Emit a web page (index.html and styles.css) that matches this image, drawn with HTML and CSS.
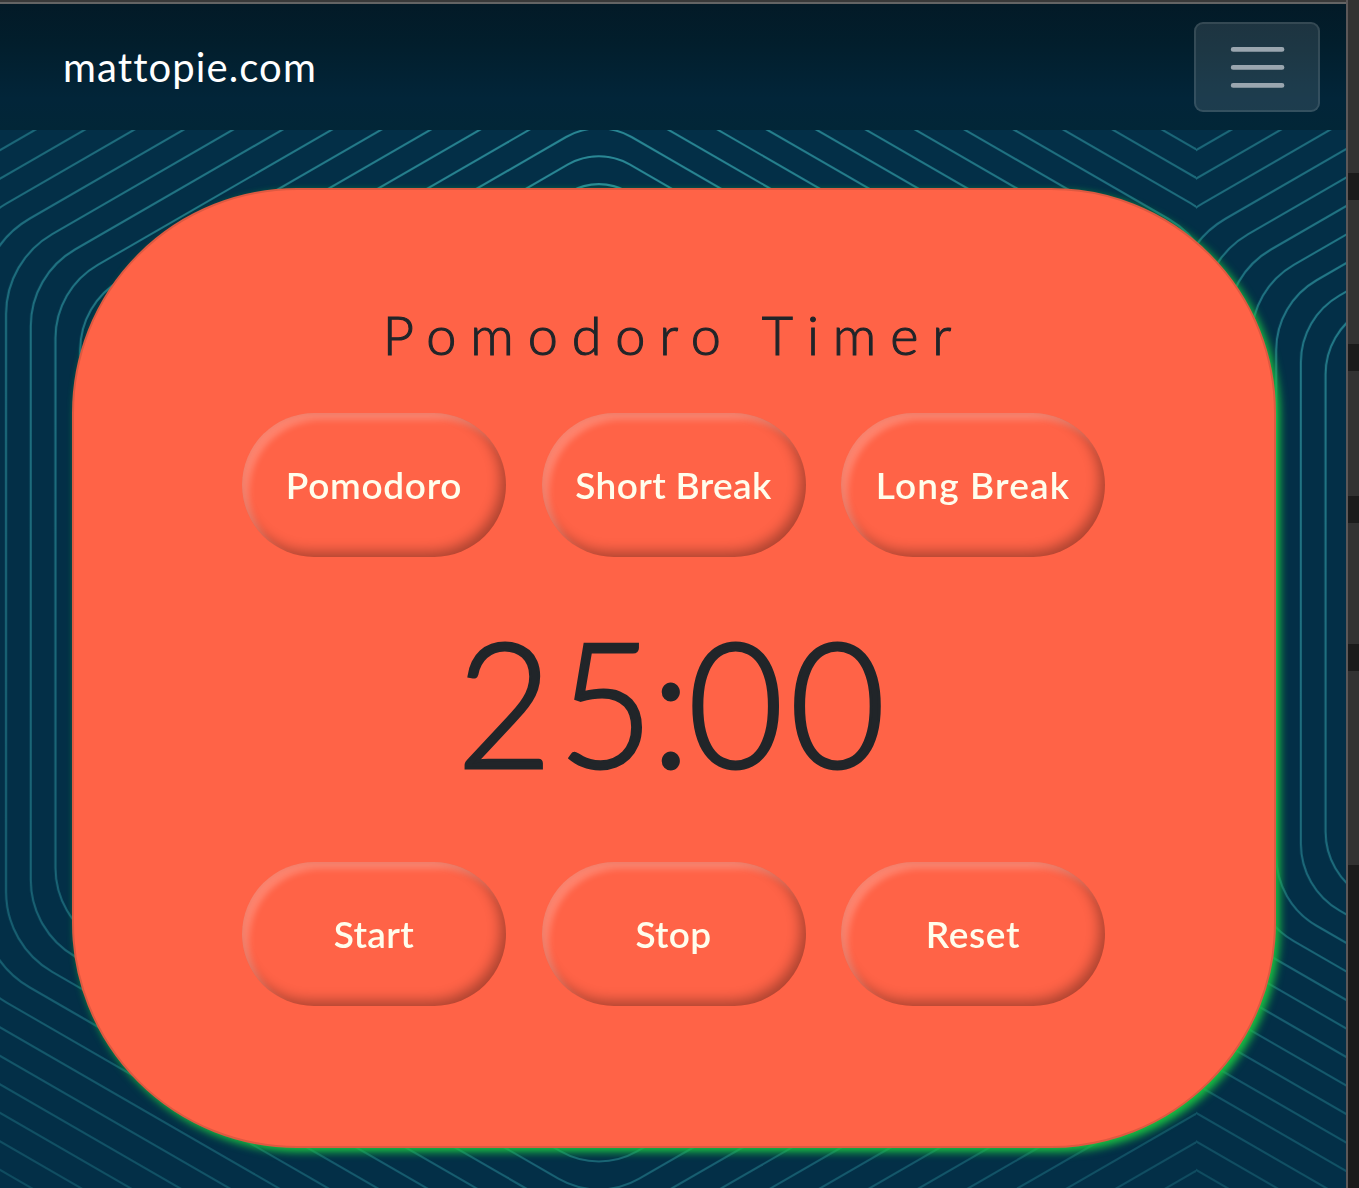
FILE: index.html
```html
<!DOCTYPE html>
<html lang="en">
<head>
<meta charset="utf-8">
<title>Pomodoro Timer</title>
<link rel="stylesheet" href="styles.css">
</head>
<body>
<div class="frame">
  <div class="page">
    <svg class="pattern" width="1346" height="1188" viewBox="0 0 1346 1188" aria-hidden="true">
      <defs>
        <path id="hex" class="ring" d="M-1.925-27.41A3.85 3.85 0 0 1 1.925-27.41L22.775-15.37A3.85 3.85 0 0 1 24.7-12.04V12.04A3.85 3.85 0 0 1 22.775 15.37L1.925 27.41A3.85 3.85 0 0 1-1.925 27.41L-22.775 15.37A3.85 3.85 0 0 1-24.7 12.04V-12.04A3.85 3.85 0 0 1-22.775-15.37Z"/>
        <clipPath id="cellclip"><rect x="-599" y="-700" width="1196" height="1400"/></clipPath>
        <linearGradient id="fade" gradientUnits="userSpaceOnUse" x1="0" y1="0" x2="0" y2="1188">
          <stop offset="0" stop-color="#fff"/>
          <stop offset="1" stop-color="#a0a0a0"/>
        </linearGradient>
        <mask id="shade" maskUnits="userSpaceOnUse" x="0" y="0" width="1346" height="1188"><rect width="1346" height="1188" fill="url(#fade)"/></mask>
        <g id="cell">
          <use href="#hex" transform="scale(15)" opacity=".98"/>
          <use href="#hex" transform="scale(16)" opacity=".95"/>
          <use href="#hex" transform="scale(17)" opacity=".92"/>
          <use href="#hex" transform="scale(18)" opacity=".9"/>
          <use href="#hex" transform="scale(19)" opacity=".87"/>
          <use href="#hex" transform="scale(20)" opacity=".84"/>
          <use href="#hex" transform="scale(21)" opacity=".81"/>
          <use href="#hex" transform="scale(22)" opacity=".78"/>
          <use href="#hex" transform="scale(23)" opacity=".75"/>
          <use href="#hex" transform="scale(24)" opacity=".72"/>
          <use href="#hex" transform="scale(25)" opacity=".69"/>
          <use href="#hex" transform="scale(26)" opacity=".66"/>
          <use href="#hex" transform="scale(27)" opacity=".63"/>
          <use href="#hex" transform="scale(28)" opacity=".6"/>
          <use href="#hex" transform="scale(29)" opacity=".57"/>
          <use href="#hex" transform="scale(30)" opacity=".54"/>
          <use href="#hex" transform="scale(31)" opacity=".51"/>
          <use href="#hex" transform="scale(32)" opacity=".48"/>
          <use href="#hex" transform="scale(33)" opacity=".45"/>
        </g>
      </defs>
      <g mask="url(#shade)">
        <g transform="translate(598.8 603)"><g clip-path="url(#cellclip)"><use href="#cell"/></g></g>
        <g transform="translate(1794.8 603)"><g clip-path="url(#cellclip)"><use href="#cell"/></g></g>
      </g>
    </svg>
    <div class="topline"></div>
    <nav class="navbar">
      <a class="brand">mattopie.com</a>
      <button class="toggler" aria-label="Menu">
        <svg width="60" height="60" viewBox="0 0 30 30"><path d="M3.1 6.2h24.4M3.1 15.2h24.4M3.1 24.2h24.4" /></svg>
      </button>
    </nav>
    <main class="card">
      <h1 class="title">Pomodoro Timer</h1>
      <div class="row">
        <button class="pill wide">Pomodoro</button>
        <button class="pill">Short Break</button>
        <button class="pill wider">Long Break</button>
      </div>
      <div class="clock">2<span class="tight">5:</span>00</div>
      <div class="row">
        <button class="pill">Start</button>
        <button class="pill">Stop</button>
        <button class="pill wide">Reset</button>
      </div>
    </main>
  </div>
  <aside class="side"></aside>
</div>
</body>
</html>
```
FILE: styles.css
```css
* { box-sizing: border-box; }
body { margin: 0; background: #1b1b1b; font-family: Lato, "Open Sans", sans-serif; color: #212529; }
.frame { display: flex; width: 1359px; height: 1188px; overflow: hidden; }
.page { position: relative; width: 1348px; height: 1188px; overflow: hidden; background: #032f47; border-right: 2px solid #5c5859; }
.topline { position: relative; height: 4px; background: #393939; border-bottom: 2px solid #646464; }
.side { width: 11px; background: linear-gradient(#323232 0 173px, #1b1b1b 173px 200px, #323232 200px 344px, #1b1b1b 344px 371px, #323232 371px 496px, #1b1b1b 496px 523px, #323232 523px 644px, #1b1b1b 644px 671px, #323232 671px 865px, #1b1b1b 865px); }
.pattern { position: absolute; left: 0; top: 0; }
.ring { fill: none; stroke: #2f929e; stroke-width: 2.1px; vector-effect: non-scaling-stroke; }
.navbar { position: relative; display: flex; align-items: center; justify-content: space-between; height: 126px; padding: 0 26px 0 63px; background: linear-gradient(#031a27, #021e2c 30%, #022539 75%, #022637); }
.brand { color: #fff; font-size: 40px; line-height: 60px; letter-spacing: 1.1px; }
.toggler { width: 126px; height: 90px; padding: 0; display: flex; align-items: center; justify-content: center; border: 2px solid rgba(255,255,255,.1); border-radius: 9px; background: rgba(255,255,255,.11); }
.toggler path { fill: none; stroke: #9aa6af; stroke-width: 2.4; stroke-linecap: round; }
.card { position: relative; width: 1204px; height: 960px; margin: 58px 0 0 72px; padding-top: 109px; border: 2px solid #de5941; border-radius: 225px; background: #ff6347; box-shadow: 4px 4px 9px #1bc442; display: flex; flex-direction: column; align-items: center; }
.title { margin: 0; height: 73px; line-height: 72px; font-size: 54px; font-weight: 300; letter-spacing: 13.9px; white-space: nowrap; -webkit-text-stroke: 1.1px #212529; }
.row { display: flex; gap: 35.5px; margin-right: 1px; }
.title + .row { margin-top: 41px; }
.pill { width: 264px; height: 144px; padding: 0; border: 0; border-radius: 72px; background: #ff6347; color: #fffdec; font: 600 37px/54px Lato, "Open Sans", sans-serif; letter-spacing: .35px; white-space: nowrap; box-shadow: inset 7px 7px 6px rgba(255,255,255,.22), inset -5px -5px 13px rgba(0,0,0,.33); }
.pill.wide { letter-spacing: .7px; }
.pill.wider { letter-spacing: 1.15px; }
.clock { height: 305px; line-height: 288px; font-size: 174px; font-weight: 300; letter-spacing: 6px; transform: scaleX(.95); -webkit-text-stroke: 3px #212529; }
.tight { letter-spacing: -3px; }
```
